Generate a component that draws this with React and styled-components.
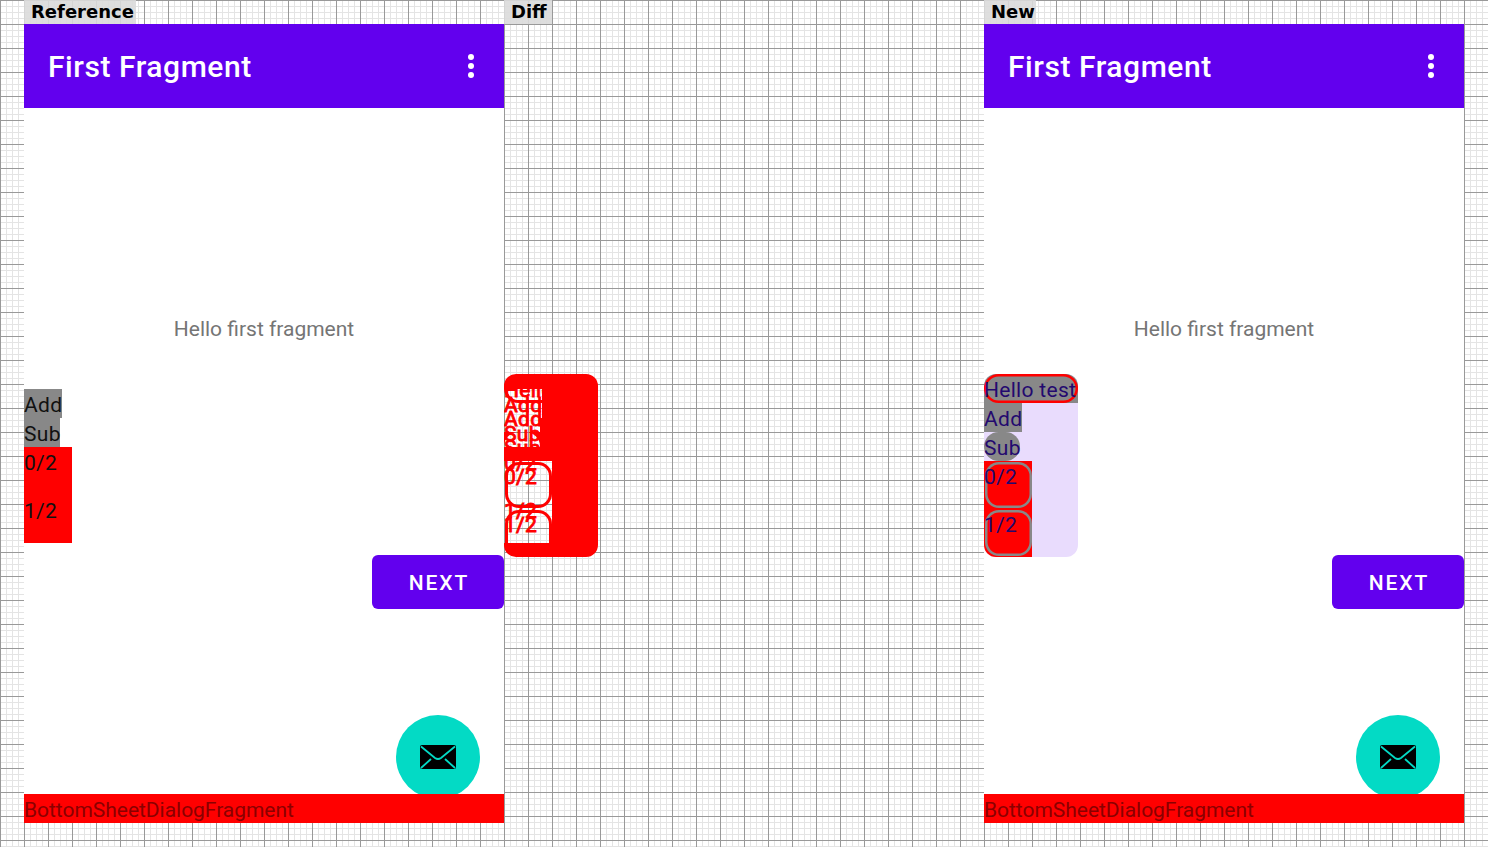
import React from 'react';
import styled, { createGlobalStyle } from 'styled-components';

const GRID = `
  linear-gradient(#999 1px, transparent 1px),
  linear-gradient(90deg, #999 1px, transparent 1px),
  linear-gradient(#e4e4e4 1px, transparent 1px),
  linear-gradient(90deg, #e4e4e4 1px, transparent 1px)
`;
const GRID_SIZE = '24px 24px, 24px 24px, 6px 6px, 6px 6px';

const Global = createGlobalStyle`
  html, body { margin: 0; padding: 0; }
  body {
    width: 1488px; height: 847px; overflow: hidden;
    background-color: #fff;
    background-image: ${GRID};
    background-size: ${GRID_SIZE};
    font-family: Roboto, "Liberation Sans", sans-serif;
  }
`;

const Columns = styled.div`
  display: grid;
  grid-template-columns: repeat(3, 480px);
  padding-left: 24px;
  height: 847px;
`;
const Column = styled.section`
  display: flex;
  flex-direction: column;
  align-items: flex-start;
`;
const Label = styled.div`
  box-sizing: border-box;
  width: ${p => p.$width}px;
  height: 24px;
  padding-left: 7px;
  background: rgba(218, 218, 218, 0.9);
  color: #000;
  font: bold 18px/24px "DejaVu Sans", sans-serif;
`;
const Screen = styled.div`
  position: relative;
  width: 480px;
  height: 799px;
  background: #fff;
  display: flex;
  flex-direction: column;
`;
const AppBar = styled.header`
  height: 84px;
  flex: none;
  background: #6200ee;
  color: #fff;
  display: flex;
  align-items: center;
  justify-content: space-between;
  padding: 0 15px 0 24px;
`;
const Title = styled.h1`
  margin: 2px 0 0;
  font: 500 30px/36px Roboto, sans-serif;
  letter-spacing: 0.56px;
`;
const Body = styled.main`
  flex: 1;
  display: flex;
  flex-direction: column;
  padding-top: 207px;
`;
const Hello = styled.p`
  margin: 0;
  text-align: center;
  font-size: 21px;
  line-height: 29px;
  color: #757575;
`;
const Slot = styled.div`
  height: 154px;
  margin-top: 45px;
  display: flex;
  align-items: center;
`;
const Panel = styled.div`
  width: ${p => (p.$tinted ? '94px' : 'auto')};
  margin-top: ${p => (p.$tinted ? '-1px' : '0')};
  background: ${p => (p.$tinted ? '#e9dcfd' : 'transparent')};
  border-radius: ${p => (p.$tinted ? '12px' : '0')};
  overflow: hidden;
  display: flex;
  flex-direction: column;
  align-items: flex-start;
  font-size: 21px;
  line-height: 33px;
  letter-spacing: 0.3px;
  color: ${p => (p.$tinted ? '#23096f' : '#111')};
`;
const Chip = styled.div`
  position: relative;
  isolation: isolate;
  width: ${p => p.$width}px;
  height: 29px;
  background: #888;
  border-radius: ${p => (p.$round ? '15px' : '0')};
  white-space: nowrap;
  &::after {
    content: ${p => (p.$outlined ? '""' : 'none')};
    position: absolute;
    z-index: -1;
    inset: 0;
    border-radius: 14.5px;
    box-shadow: inset 0 0 0 2.5px #f00;
  }
`;
const Cell = styled.div`
  position: relative;
  isolation: isolate;
  width: 48px;
  height: 48px;
  background: #f00;
  &::after {
    content: ${p => (p.$outlined ? '""' : 'none')};
    position: absolute;
    z-index: -1;
    inset: 1px 0 1px 1px;
    border-radius: 14px;
    box-shadow: inset 0 0 0 2.5px #888;
  }
`;
const NextRow = styled.div`
  display: flex;
  justify-content: flex-end;
  margin-top: 12px;
`;
const NextButton = styled.button`
  width: 132px;
  height: 54px;
  padding: 2px 0 0 2px;
  border: 0;
  border-radius: 6px;
  background: #6200ee;
  color: #fff;
  font: 500 21px/52px Roboto, sans-serif;
  letter-spacing: 1.87px;
  text-transform: uppercase;
`;
const Fab = styled.button`
  position: absolute;
  right: 24px;
  bottom: 24px;
  width: 84px;
  height: 84px;
  padding: 0;
  border: 0;
  border-radius: 50%;
  background: #03dac5;
  display: flex;
  align-items: center;
  justify-content: center;
`;
const BottomBar = styled.footer`
  position: relative;
  flex: none;
  height: 29px;
  background: #f00;
  color: #8a0000;
  font-size: 21px;
  line-height: 33px;
  letter-spacing: -0.03px;
`;

const DiffPanel = styled.div`
  position: relative;
  width: 94px;
  height: 183px;
  margin-top: 350px;
  border-radius: 12px;
  background: #f00;
`;
const Hole = styled.div`
  position: absolute;
  left: 0;
  top: ${p => p.$top}px;
  width: ${p => p.$width}px;
  height: ${p => p.$height}px;
  overflow: hidden;
  background-color: #fff;
  background-image: ${GRID};
  background-size: ${GRID_SIZE};
  background-attachment: fixed;
`;
const GhostText = styled.span`
  position: absolute;
  left: 0;
  top: ${p => p.$top}px;
  color: #f00;
  font-size: 21px;
  line-height: 33px;
  letter-spacing: 0.3px;
  white-space: nowrap;
  -webkit-text-stroke: 0.9px #f00;
`;
const Outline = styled.div`
  position: absolute;
  left: ${p => p.$left}px;
  top: ${p => p.$top}px;
  width: ${p => p.$width}px;
  height: ${p => p.$height}px;
  box-sizing: border-box;
  border: 3px solid #f00;
  border-radius: ${p => p.$radius}px;
`;
const EdgeStrip = styled.div`
  position: absolute;
  left: 36px;
  right: 0;
  top: 29px;
  bottom: 0;
  background: #f00;
`;
const RoundMask = styled.div`
  position: absolute;
  left: 0;
  right: 0;
  top: 43px;
  bottom: 0;
  overflow: hidden;
  &::after {
    content: "";
    position: absolute;
    left: 0;
    top: 0;
    width: 36px;
    height: 29px;
    border-radius: 15px;
    box-shadow: 0 0 0 24px #f00;
  }
`;

const Dots = () => (
  <svg width="36" height="36" viewBox="0 0 36 36" fill="#fff" aria-hidden="true">
    <circle cx="18" cy="9" r="3" />
    <circle cx="18" cy="18" r="3" />
    <circle cx="18" cy="27" r="3" />
  </svg>
);

const Mail = () => (
  <svg width="36" height="24" viewBox="0 0 36 24" aria-hidden="true">
    <rect width="36" height="24" rx="2" fill="#000" />
    <path
      d="M1 1.5 L15 13 Q18 15 21 13 L35 1.5 M1 23 L11 14 M35 23 L25 14"
      fill="none"
      stroke="#03dac5"
      strokeWidth="1.8"
    />
  </svg>
);

const Phone = ({ isNew }) => (
  <Screen>
    <AppBar>
      <Title>First Fragment</Title>
      <Dots />
    </AppBar>
    <Body>
      <Hello>Hello first fragment</Hello>
      <Slot>
        <Panel $tinted={isNew}>
          {isNew && <Chip $outlined $width={94}>Hello test</Chip>}
          <Chip $width={38}>Add</Chip>
          <Chip $width={36} $round={isNew}>Sub</Chip>
          <Cell $outlined={isNew}>0/2</Cell>
          <Cell $outlined={isNew}>1/2</Cell>
        </Panel>
      </Slot>
      <NextRow>
        <NextButton>Next</NextButton>
      </NextRow>
    </Body>
    <Fab aria-label="mail">
      <Mail />
    </Fab>
    <BottomBar>BottomSheetDialogFragment</BottomBar>
  </Screen>
);

const DiffView = () => (
  <DiffPanel>
    <Hole $top={15} $width={38} $height={58}>
      <GhostText $top={-15}>Hello test</GhostText>
      <GhostText $top={0}>Add</GhostText>
      <GhostText $top={14}>Add</GhostText>
      <GhostText $top={29}>Sub</GhostText>
      <GhostText $top={43}>Sub</GhostText>
      <Outline $left={0} $top={-15} $width={94} $height={29} $radius={14.5} />
      <EdgeStrip />
      <RoundMask />
    </Hole>
    <Hole $top={87} $width={48} $height={82}>
      <GhostText $top={-14}>0/2</GhostText>
      <GhostText $top={0}>0/2</GhostText>
      <GhostText $top={34}>1/2</GhostText>
      <GhostText $top={48}>1/2</GhostText>
      <Outline $left={1} $top={1} $width={47} $height={46} $radius={14} />
      <Outline $left={1} $top={49} $width={47} $height={46} $radius={14} />
    </Hole>
  </DiffPanel>
);

export default function App() {
  return (
    <>
      <Global />
      <Columns>
        <Column>
          <Label $width={112}>Reference</Label>
          <Phone />
        </Column>
        <Column>
          <Label $width={48}>Diff</Label>
          <DiffView />
        </Column>
        <Column>
          <Label $width={52}>New</Label>
          <Phone isNew />
        </Column>
      </Columns>
    </>
  );
}
